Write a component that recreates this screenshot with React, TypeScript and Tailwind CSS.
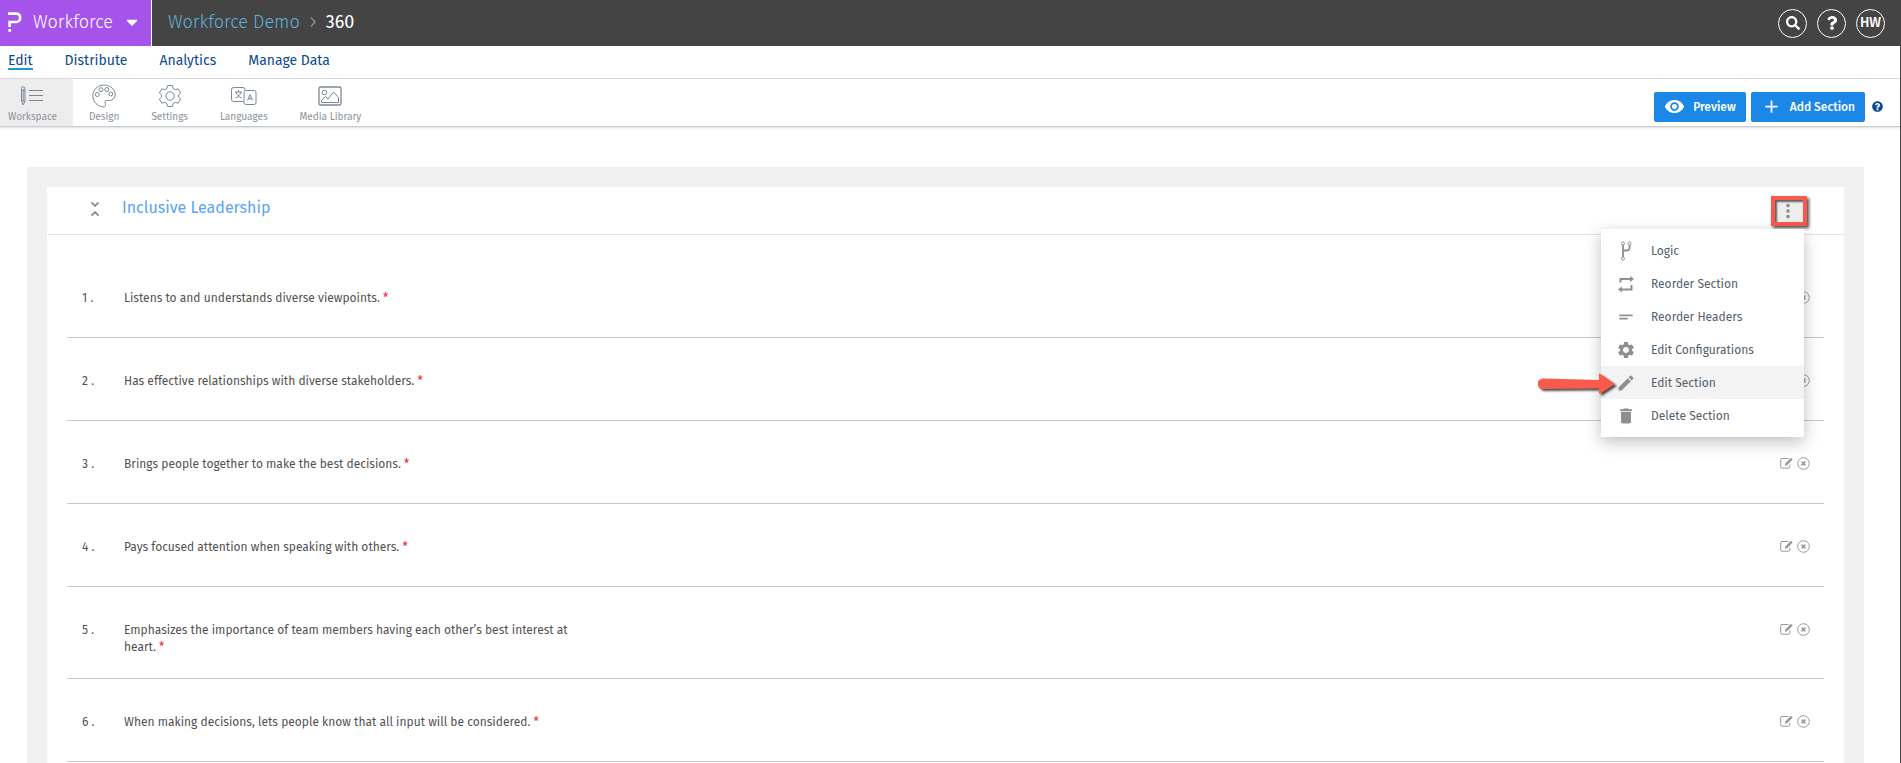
import { FaCaretDown, FaQuestion, FaQuestionCircle, FaSearch } from 'react-icons/fa';
import { MdAdd, MdDelete, MdEdit, MdMoreVert, MdSettings, MdShortText, MdUnfoldLess, MdVisibility } from 'react-icons/md';

const tabs = ['Edit', 'Distribute', 'Analytics', 'Manage Data'];

const questions = [
  'Listens to and understands diverse viewpoints.',
  'Has effective relationships with diverse stakeholders.',
  'Brings people together to make the best decisions.',
  'Pays focused attention when speaking with others.',
  'Emphasizes the importance of team members having each other’s best interest at heart.',
  'When making decisions, lets people know that all input will be considered.',
];

const LogoIcon = () => (
  <svg className="mr-[11px] shrink-0" width="14" height="20" viewBox="0 0 14 20" fill="none" stroke="#fff" strokeWidth="2.6">
    <path d="M0 1.6h8.500a3.600 3.600 0 0 1 3.600 3.600v1.200A3.600 3.600 0 0 1 8.500 10H1.600v5" />
    <circle cx="1.700" cy="18.300" r="1.600" fill="#fff" stroke="none" />
  </svg>
);

const WorkspaceIcon = () => (
  <svg width="22" height="22" viewBox="0 0 22 22" fill="none" stroke="#7d8896">
    <path d="M.5 3.500a1.700 1.700 0 0 1 3.400 0V16l-1.700 4-1.700-4zM.5 5h3.400M2.200 5v11M.5 16h3.400" />
    <path d="M8 5.500h14M8 10.500h14M8 15.500h14" strokeWidth="1.2" />
  </svg>
);

const DesignIcon = () => (
  <svg width="24" height="24" viewBox="0 0 24 24" fill="none" stroke="#7d8896">
    <path d="M12 23C5.500 22.500.8 18 .8 12 .8 5.600 5.800 1 12 1s11.200 4.300 11.200 9.800c0 3.400-2.500 5.700-5.700 5.700-2.200 0-3.700-.4-4.400.7-.7 1.100.6 2 .3 3.600-.2 1.200-.6 2.200-1.400 2.200z" />
    <circle cx="5.300" cy="10.500" r="2" />
    <circle cx="9" cy="5.700" r="2" />
    <circle cx="14.800" cy="5.500" r="2" />
    <circle cx="18.700" cy="10" r="2" />
  </svg>
);

const SettingsIcon = () => (
  <svg width="24" height="24" viewBox="0 0 24 24" fill="none" stroke="#7d8896">
    <path
      d="M9.600 1.500h4.800l.7 3 2.100 1.200 3-.9 2.400 4.200-2.300 2.100v1.800l2.300 2.100-2.400 4.200-3-.9-2.100 1.200-.7 3H9.600l-.7-3-2.100-1.200-3 .9L1.400 15l2.300-2.100v-1.800L1.400 9l2.400-4.200 3 .9 2.100-1.200z"
      strokeLinejoin="round"
    />
    <circle cx="12" cy="12" r="4.200" />
  </svg>
);

const LanguagesIcon = () => (
  <svg width="26" height="20" viewBox="0 0 26 20" fill="none" stroke="#7d8896">
    <path d="M12.500 15.500h-10a2 2 0 0 1-2-2v-10a2 2 0 0 1 2-2h9.500a2 2 0 0 1 2 2v1" />
    <rect x="13" y="4.500" width="12" height="14" rx="1.800" />
    <path d="M4 6h7M7.500 4v2M5 6c.7 2.800 2.800 5 5.500 6M10 6c-.7 2.800-2.800 5-5.500 6" />
    <path d="M16.600 14.500 19 8.500l2.400 6M17.300 12.700h3.400" />
  </svg>
);

const MediaIcon = () => (
  <svg width="24" height="20" viewBox="0 0 24 20" fill="none" stroke="#7d8896">
    <rect x="1" y="1" width="22" height="18" rx="1.500" strokeWidth="1.300" />
    <circle cx="6.500" cy="6.500" r="2.300" />
    <path d="M3.500 16.500v-2.300l4-3.700 2.500 2.500L15.500 6l5 5.500v5z" strokeLinejoin="round" />
  </svg>
);

const LogicIcon = () => (
  <svg width="20" height="20" viewBox="0 0 20 20" fill="none" stroke="#8f8f8f">
    <circle cx="7" cy="2.500" r="1.500" />
    <circle cx="13.500" cy="2.500" r="1.500" />
    <circle cx="7" cy="17.500" r="1.500" />
    <path d="M7 4v12M13.500 4v3c0 2-1.500 2.500-3 2.500H7" strokeWidth="1.800" />
  </svg>
);

const ReorderIcon = () => (
  <svg width="20" height="20" viewBox="0 0 20 20" fill="none" stroke="#8f8f8f" strokeWidth="2">
    <path d="M4.500 8.500V5H15M15.500 11v4.500H5" />
    <path d="M14 2l4 3-4 3zM6 12.500l-4 3 4 3z" fill="#8f8f8f" stroke="none" />
  </svg>
);

const EditIcon = () => (
  <svg width="13" height="12" viewBox="0 0 13 12" fill="none" stroke="#999">
    <path d="M8.500 1.500H2A1.300 1.300 0 0 0 .7 2.800v7A1.300 1.300 0 0 0 2 11.200h6.500a1.300 1.300 0 0 0 1.300-1.300V7.500" />
    <path d="M4.800 8.900 5.600 6.200 10.800.8l1.900 1.700-5.300 5.500z" fill="#999" stroke="none" />
  </svg>
);

const RemoveIcon = () => (
  <svg width="13" height="13" viewBox="0 0 13 13" fill="none" stroke="#999">
    <circle cx="6.500" cy="6.500" r="5.800" />
    <path d="m4.600 4.600 3.800 3.800m0-3.800L4.600 8.400" strokeWidth="1.500" />
  </svg>
);

const tools = [
  { label: 'Workspace', icon: WorkspaceIcon },
  { label: 'Design', icon: DesignIcon },
  { label: 'Settings', icon: SettingsIcon },
  { label: 'Languages', icon: LanguagesIcon },
  { label: 'Media Library', icon: MediaIcon },
];

const menuItems = [
  { label: 'Logic', icon: LogicIcon },
  { label: 'Reorder Section', icon: ReorderIcon },
  { label: 'Reorder Headers', icon: MdShortText },
  { label: 'Edit Configurations', icon: MdSettings },
  { label: 'Edit Section', icon: MdEdit },
  { label: 'Delete Section', icon: MdDelete },
];

function TopBar() {
  return (
    <header className="flex h-[46px] shrink-0 items-stretch bg-[#444] text-lg font-light text-white">
      <button className="flex w-[152px] items-center border-r border-white bg-[#a653eb] pr-[10px] pb-[2px] pl-2">
        <LogoIcon />
        <span>Workforce</span>
        <FaCaretDown className="ml-auto size-[18px]" />
      </button>
      <nav className="flex items-center gap-[10px] pb-[2px] pl-4">
        <a href="#" className="text-[#5fb0da]">Workforce Demo</a>
        <svg width="6" height="12" viewBox="0 0 6 12" fill="none" stroke="#8c8c8c" strokeWidth="1.500">
          <path d="m1 1.500 4 4.500-4 4.500" />
        </svg>
        <span className="font-normal">360</span>
      </nav>
      <div className="ml-auto flex items-center gap-[10px] pr-4 text-sm font-medium">
        <button aria-label="Search" className="flex size-[29px] items-center justify-center rounded-full border border-white">
          <FaSearch className="size-[14px]" />
        </button>
        <button aria-label="Help" className="flex size-[29px] items-center justify-center rounded-full border border-white">
          <FaQuestion className="size-[14px]" />
        </button>
        <button className="flex size-[29px] items-center justify-center rounded-full border border-white">HW</button>
      </div>
    </header>
  );
}

function ToolBar() {
  return (
    <div className="z-10 flex h-12 shrink-0 border-b border-[#ccc] shadow-sm">
      {tools.map(({ label, icon: Icon }, index) => (
        <button
          key={label}
          className={`flex flex-col items-center pr-4 text-[10px] leading-4 text-[#8a929c] ${
            index === 0 ? 'bg-[#ededed] pl-2' : 'pl-4'
          }`}
        >
          <span className="mt-1 flex h-[26px] items-center">
            <Icon />
          </span>
          {label}
        </button>
      ))}
      <div className="ml-auto flex items-center gap-[5px] pt-3 pr-[17px] pb-1 text-xs font-medium text-white">
        <button className="flex h-[30px] items-center gap-2 rounded-xs bg-[#1b87e6] px-[10px]">
          <MdVisibility className="size-[21px]" />
          Preview
        </button>
        <button className="flex h-[30px] items-center gap-2 rounded-xs bg-[#1b87e6] px-[10px]">
          <MdAdd className="size-[21px]" />
          Add Section
        </button>
        <button aria-label="Section help" className="ml-[2px] text-[#0b4a92]">
          <FaQuestionCircle className="size-[11px]" />
        </button>
      </div>
    </div>
  );
}

function SectionMenu() {
  return (
    <div className="absolute top-[42px] right-10 w-[203px] bg-white py-[5px] shadow-[0_5px_15px_rgba(0,0,0,0.25)]">
      {menuItems.map(({ label, icon: Icon }) => (
        <button
          key={label}
          className={`relative flex h-[33px] w-full items-center gap-[15px] pl-[15px] text-xs text-[#55606b] ${
            label === 'Edit Section' ? 'bg-[#f3f3f3]' : ''
          }`}
        >
          <Icon className="size-5 text-[#8f8f8f]" />
          {label}
          {label === 'Edit Section' && (
            <svg
              className="absolute top-[7px] right-[188px] drop-shadow-[2px_2px_1px_rgba(0,0,0,0.7)]"
              width="78"
              height="22"
              viewBox="0 0 78 22"
              fill="#fa5a4b"
            >
              <path d="M5 5.500 61 7V1.500Q61 0 62.500 1L77 11 62.500 20.500Q61 21.500 61 20v-4.500L5 16A5.200 5.200 0 0 1 5 5.500z" />
            </svg>
          )}
        </button>
      ))}
    </div>
  );
}

export default function App() {
  return (
    <div className="flex h-screen flex-col overflow-hidden bg-white font-['Fira_Sans',Roboto,sans-serif]">
      <TopBar />
      <div className="flex min-h-0 flex-1 flex-col border-r border-[#444]">
        <nav className="flex h-[33px] shrink-0 items-start gap-8 border-b border-[#ddd] pt-[7px] pl-2 text-sm leading-[15px] text-[#0b4a8f]">
          {tabs.map((tab, index) => (
            <a key={tab} href="#" className={index === 0 ? 'border-b-2 border-[#189ad8]' : ''}>
              {tab}
            </a>
          ))}
        </nav>
        <ToolBar />
        <main className="min-h-0 flex-1 overflow-hidden pt-10 pr-9 pl-[27px]">
          <div className="bg-[#f1f1f1] p-5">
            <section className="bg-white pb-5">
              <div className="relative flex h-12 items-center gap-4 border-b border-[#e3e3e3] px-[37px]">
                <button aria-label="Collapse section" className="pb-1 text-[#8f8f8f]">
                  <MdUnfoldLess className="size-[22px]" />
                </button>
                <h2 className="pb-[6px] text-base text-[#5ba4f5]">Inclusive Leadership</h2>
                <button
                  aria-label="Section options"
                  className="ml-auto flex h-[30px] w-9 items-center border-4 border-[#fa5a4b] bg-[#eee] pl-[2px] shadow-[2px_2px_3px_rgba(0,0,0,0.7),inset_2px_2px_2px_rgba(0,0,0,0.6)]"
                >
                  <MdMoreVert className="size-[22px] text-[#8f8f8f]" />
                </button>
                <SectionMenu />
              </div>
              <ol className="px-5 pt-5 text-xs leading-[17px] text-[#525252]">
                {questions.map((question, index) => (
                  <li key={question} className="flex min-h-[83px] items-start border-b border-[#c8c8c8] pt-[35px] pr-[14px] pb-[22px] pl-[15px]">
                    <span className="w-[42px]">{index + 1} .</span>
                    <p className="w-[450px]">
                      {question} <span className="text-[#e8252f]">*</span>
                    </p>
                    <div className="ml-auto flex h-[14px] items-center gap-1">
                      <button aria-label={`Edit question ${index + 1}`}>
                        <EditIcon />
                      </button>
                      <button aria-label={`Remove question ${index + 1}`}>
                        <RemoveIcon />
                      </button>
                    </div>
                  </li>
                ))}
              </ol>
            </section>
          </div>
        </main>
      </div>
    </div>
  );
}
